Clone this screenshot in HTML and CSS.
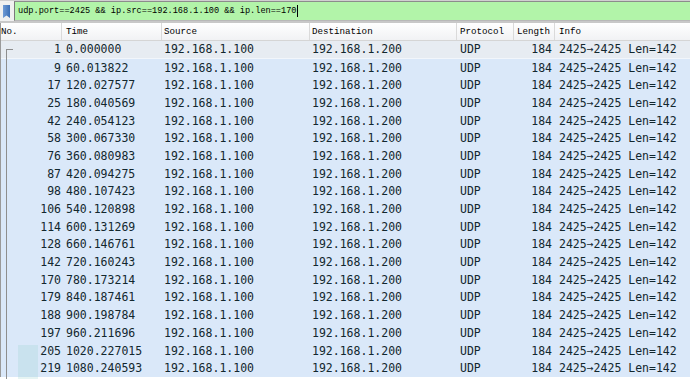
FILE: index.html
```html
<!DOCTYPE html>
<html lang="en">
<head>
  <meta charset="UTF-8" />
  <title>Packet list</title>
  <link rel="stylesheet" href="styles.css">
</head>
<body>
  <div class="filterbar">
    <div class="bookmark"></div>
    <div class="filter">udp.port==2425 &amp;&amp; ip.src==192.168.1.100 &amp;&amp; ip.len==170<span class="caret"></span></div>
  </div>

  <div class="list">
    <div class="head">
      <div class="c no">No.</div>
      <div class="c time">Time</div>
      <div class="c src">Source</div>
      <div class="c dst">Destination</div>
      <div class="c proto">Protocol</div>
      <div class="c len">Length</div>
      <div class="c info">Info</div>
    </div>

    <div class="row first"><div class="c no">1</div><div class="c time">0.000000</div><div class="c src">192.168.1.100</div><div class="c dst">192.168.1.200</div><div class="c proto">UDP</div><div class="c len">184</div><div class="c info">2425→2425 Len=142</div></div>
    <div class="row"><div class="c no">9</div><div class="c time">60.013822</div><div class="c src">192.168.1.100</div><div class="c dst">192.168.1.200</div><div class="c proto">UDP</div><div class="c len">184</div><div class="c info">2425→2425 Len=142</div></div>
    <div class="row"><div class="c no">17</div><div class="c time">120.027577</div><div class="c src">192.168.1.100</div><div class="c dst">192.168.1.200</div><div class="c proto">UDP</div><div class="c len">184</div><div class="c info">2425→2425 Len=142</div></div>
    <div class="row"><div class="c no">25</div><div class="c time">180.040569</div><div class="c src">192.168.1.100</div><div class="c dst">192.168.1.200</div><div class="c proto">UDP</div><div class="c len">184</div><div class="c info">2425→2425 Len=142</div></div>
    <div class="row"><div class="c no">42</div><div class="c time">240.054123</div><div class="c src">192.168.1.100</div><div class="c dst">192.168.1.200</div><div class="c proto">UDP</div><div class="c len">184</div><div class="c info">2425→2425 Len=142</div></div>
    <div class="row"><div class="c no">58</div><div class="c time">300.067330</div><div class="c src">192.168.1.100</div><div class="c dst">192.168.1.200</div><div class="c proto">UDP</div><div class="c len">184</div><div class="c info">2425→2425 Len=142</div></div>
    <div class="row"><div class="c no">76</div><div class="c time">360.080983</div><div class="c src">192.168.1.100</div><div class="c dst">192.168.1.200</div><div class="c proto">UDP</div><div class="c len">184</div><div class="c info">2425→2425 Len=142</div></div>
    <div class="row"><div class="c no">87</div><div class="c time">420.094275</div><div class="c src">192.168.1.100</div><div class="c dst">192.168.1.200</div><div class="c proto">UDP</div><div class="c len">184</div><div class="c info">2425→2425 Len=142</div></div>
    <div class="row"><div class="c no">98</div><div class="c time">480.107423</div><div class="c src">192.168.1.100</div><div class="c dst">192.168.1.200</div><div class="c proto">UDP</div><div class="c len">184</div><div class="c info">2425→2425 Len=142</div></div>
    <div class="row"><div class="c no">106</div><div class="c time">540.120898</div><div class="c src">192.168.1.100</div><div class="c dst">192.168.1.200</div><div class="c proto">UDP</div><div class="c len">184</div><div class="c info">2425→2425 Len=142</div></div>
    <div class="row"><div class="c no">114</div><div class="c time">600.131269</div><div class="c src">192.168.1.100</div><div class="c dst">192.168.1.200</div><div class="c proto">UDP</div><div class="c len">184</div><div class="c info">2425→2425 Len=142</div></div>
    <div class="row"><div class="c no">128</div><div class="c time">660.146761</div><div class="c src">192.168.1.100</div><div class="c dst">192.168.1.200</div><div class="c proto">UDP</div><div class="c len">184</div><div class="c info">2425→2425 Len=142</div></div>
    <div class="row"><div class="c no">142</div><div class="c time">720.160243</div><div class="c src">192.168.1.100</div><div class="c dst">192.168.1.200</div><div class="c proto">UDP</div><div class="c len">184</div><div class="c info">2425→2425 Len=142</div></div>
    <div class="row"><div class="c no">170</div><div class="c time">780.173214</div><div class="c src">192.168.1.100</div><div class="c dst">192.168.1.200</div><div class="c proto">UDP</div><div class="c len">184</div><div class="c info">2425→2425 Len=142</div></div>
    <div class="row"><div class="c no">179</div><div class="c time">840.187461</div><div class="c src">192.168.1.100</div><div class="c dst">192.168.1.200</div><div class="c proto">UDP</div><div class="c len">184</div><div class="c info">2425→2425 Len=142</div></div>
    <div class="row"><div class="c no">188</div><div class="c time">900.198784</div><div class="c src">192.168.1.100</div><div class="c dst">192.168.1.200</div><div class="c proto">UDP</div><div class="c len">184</div><div class="c info">2425→2425 Len=142</div></div>
    <div class="row"><div class="c no">197</div><div class="c time">960.211696</div><div class="c src">192.168.1.100</div><div class="c dst">192.168.1.200</div><div class="c proto">UDP</div><div class="c len">184</div><div class="c info">2425→2425 Len=142</div></div>
    <div class="row"><div class="c no">205</div><div class="c time">1020.227015</div><div class="c src">192.168.1.100</div><div class="c dst">192.168.1.200</div><div class="c proto">UDP</div><div class="c len">184</div><div class="c info">2425→2425 Len=142</div></div>
    <div class="row"><div class="c no">219</div><div class="c time">1080.240593</div><div class="c src">192.168.1.100</div><div class="c dst">192.168.1.200</div><div class="c proto">UDP</div><div class="c len">184</div><div class="c info">2425→2425 Len=142</div></div>

    <div class="tree"></div>
    <div class="mark"></div>
  </div>
</body>
</html>
```

FILE: styles.css
```css
body {
  margin: 0;
  width: 690px;
  height: 379px;
  overflow: hidden;
  background: #ffffff;
}

.filterbar {
  display: flex;
  height: 23px;
  box-sizing: border-box;
  background: #f0f0f0;
  border-top: 1px solid #d0d0d0;
  border-bottom: 2px solid #c8c8c8;
}

.bookmark {
  width: 7px;
  height: 13px;
  margin: 4px 4px 0 3px;
  background: linear-gradient(to right, #6f9bd6, #3c6fb5);
  clip-path: polygon(0 0, 100% 0, 100% 100%, 50% 80%, 0 100%);
}

.filter {
  flex: 1;
  display: flex;
  align-items: center;
  background: #b2f4a9;
  border-top: 1px solid #8c8c8c;
  border-left: 1px solid #7a7a7a;
  border-bottom: 1px solid #b8b8b8;
  padding-left: 3px;
  font-family: "Liberation Mono", monospace;
  font-size: 8.6px;
  color: #000;
  white-space: pre;
}

.caret {
  display: inline-block;
  width: 1px;
  height: 12px;
  background: #000;
  margin-left: 1px;
}

.list {
  position: relative;
  border-left: 1px solid #9a9a9a;
}

.head {
  display: flex;
  height: 17px;
  align-items: center;
  background: linear-gradient(to bottom, #ffffff, #f1f2f4);
  border-bottom: 1px solid #d5d5d5;
  font-family: "Liberation Mono", monospace;
  font-size: 9.2px;
  color: #000;
}

.head .c {
  border-right: 1px solid #dadada;
  height: 100%;
  display: flex;
  align-items: center;
}

.head .no { justify-content: flex-start; padding-left: 0; }
.head .len { justify-content: flex-start; padding: 0 0 0 3px; }

.row {
  display: flex;
  height: 17.7px;
  align-items: center;
  background: #dae8f9;
  font-family: "DejaVu Sans Mono", monospace;
  font-size: 11.5px;
  color: #12272e;
}

.row.first {
  background: #e7ecf2;
  border-bottom: 1px solid #f2f6fb;
  box-sizing: border-box;
}

.c {
  box-sizing: border-box;
  white-space: pre;
}

.no { width: 61px; text-align: right; padding-right: 1px; }
.time { width: 100px; padding-left: 4px; }
.src { width: 148px; padding-left: 2px; }
.dst { width: 147px; padding-left: 2px; }
.proto { width: 57px; padding-left: 3px; }
.len { width: 41px; text-align: right; padding-right: 3px; }
.info { flex: 1; padding-left: 4px; border-right: none !important; }

.tree {
  position: absolute;
  left: 5px;
  top: 26px;
  width: 6px;
  height: 340px;
  border-left: 1px solid #8e8e8e;
  border-top: 1px solid #8e8e8e;
}

.mark {
  position: absolute;
  left: 17px;
  top: 322px;
  width: 20px;
  height: 34px;
  background: rgba(140, 205, 200, 0.22);
  pointer-events: none;
}
```
